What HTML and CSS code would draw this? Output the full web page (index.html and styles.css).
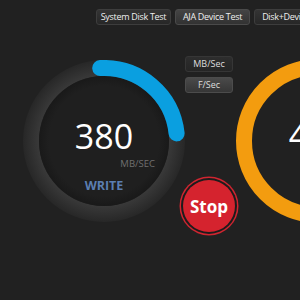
FILE: index.html
```html
<!DOCTYPE html>
<html lang="en">
<head>
    <meta charset="UTF-8">
    <title>Disk Speed Test</title>
    <link rel="stylesheet" href="styles.css">
</head>
<body>
    <div class="toolbar">
        <div class="tab tab1">System Disk Test</div>
        <div class="tab tab2">AJA Device Test</div>
        <div class="tab tab3">Disk+Device Test</div>
    </div>

    <div class="main">
        <!-- write gauge -->
        <div class="gauge">
            <svg class="ring" width="162" height="162" viewBox="0 0 162 162">
                <defs>
                    <radialGradient id="trackGrad" cx="81" cy="81" r="81" gradientUnits="userSpaceOnUse">
                        <stop offset="0.80" stop-color="#393939"/>
                        <stop offset="1" stop-color="#272727"/>
                    </radialGradient>
                    <radialGradient id="innerGrad" cx="81" cy="81" r="65" gradientUnits="userSpaceOnUse">
                        <stop offset="0.85" stop-color="#1f1f1f"/>
                        <stop offset="1" stop-color="#191919"/>
                    </radialGradient>
                </defs>
                <circle cx="81" cy="81" r="73" fill="none" stroke="url(#trackGrad)" stroke-width="16"/>
                <circle cx="81" cy="81" r="65" fill="url(#innerGrad)"/>
                <path d="M 77.2 8.1 A 73 73 0 0 1 153.6 73.4" fill="none" stroke="#0a9fe0" stroke-width="16" stroke-linecap="round"/>
            </svg>
            <div class="value">380</div>
            <div class="unit">MB/SEC</div>
            <div class="label write">WRITE</div>
        </div>

        <!-- middle controls -->
        <div class="middle">
            <div class="unitbtn">MB/Sec</div>
            <div class="unitbtn active">F/Sec</div>
            <div class="stop">Stop</div>
        </div>

        <!-- read gauge -->
        <div class="gauge read-gauge">
            <svg class="ring" width="164" height="164" viewBox="0 0 164 164">
                <circle cx="82" cy="82" r="74" fill="none" stroke="#f39c0f" stroke-width="16"/>
            </svg>
            <div class="value">450</div>
            <div class="label read">READ</div>
        </div>
    </div>
</body>
</html>
```

FILE: styles.css
```css
body {
    margin: 0;
    background-color: #212121;
    overflow: hidden;
    font-family: "Open Sans", "Noto Sans", sans-serif;
    width: 300px;
    height: 300px;
}

/* top buttons */
.toolbar {
    display: flex;
    gap: 4px;
    padding: 9px 0 0 96px;
    white-space: nowrap;
    overflow: hidden;
}
.tab {
    flex-shrink: 0;
    height: 14px;
    line-height: 14px;
    text-align: center;
    font-size: 9px;
    letter-spacing: -0.3px;
    color: #eeeeee;
    border: 1px solid #3d3d3d;
    border-radius: 3px;
    background: linear-gradient(#343434, #272727);
}
.tab1 { width: 73px; }
.tab2 { width: 73px; background: linear-gradient(#444444, #323232); border-color: #4a4a4a; }
.tab3 { width: 80px; }

.main {
    display: flex;
    align-items: flex-start;
    margin-top: 31px;
    padding-left: 23px;
}

/* gauges */
.gauge {
    position: relative;
    flex-shrink: 0;
    width: 162px;
    height: 162px;
    margin-top: 4px;
    display: flex;
    flex-direction: column;
    align-items: center;
}
.read-gauge {
    width: 164px;
    height: 164px;
    margin-top: 3px;
}
.ring {
    position: absolute;
    left: 0;
    top: 0;
}
.value {
    position: relative;
    margin-top: 56px;
    font-size: 34px;
    line-height: 40px;
    color: #ffffff;
}
.unit {
    position: relative;
    align-self: flex-end;
    margin-right: 30px;
    margin-top: 1px;
    font-size: 9.5px;
    color: #6f6f6f;
}
.label {
    position: relative;
    margin-top: 7px;
    font-size: 12.5px;
    font-weight: bold;
}
.write {
    color: #5b7eb1;
}
.read {
    margin-top: 21px;
    color: #b47a1f;
}

/* middle column */
.middle {
    flex-shrink: 0;
    width: 51px;
    display: flex;
    flex-direction: column;
}
.unitbtn {
    width: 46px;
    height: 14px;
    line-height: 14px;
    margin-bottom: 5px;
    text-align: center;
    font-size: 9px;
    color: #dddddd;
    border: 1px solid #363636;
    border-radius: 3px;
    background: linear-gradient(#2d2d2d, #252525);
}
.unitbtn.active {
    background: linear-gradient(#4a4a4a, #363636);
    border-color: #4c4c4c;
}
.stop {
    width: 52px;
    height: 52px;
    margin: 82px 0 0 -2px;
    border-radius: 50%;
    background: #d5232e;
    box-shadow: 0 0 0 2px #1c1c1c, 0 0 0 3.5px #cf2530;
    color: #ffffff;
    font-size: 17px;
    font-weight: bold;
    display: flex;
    align-items: center;
    justify-content: center;
}
```
